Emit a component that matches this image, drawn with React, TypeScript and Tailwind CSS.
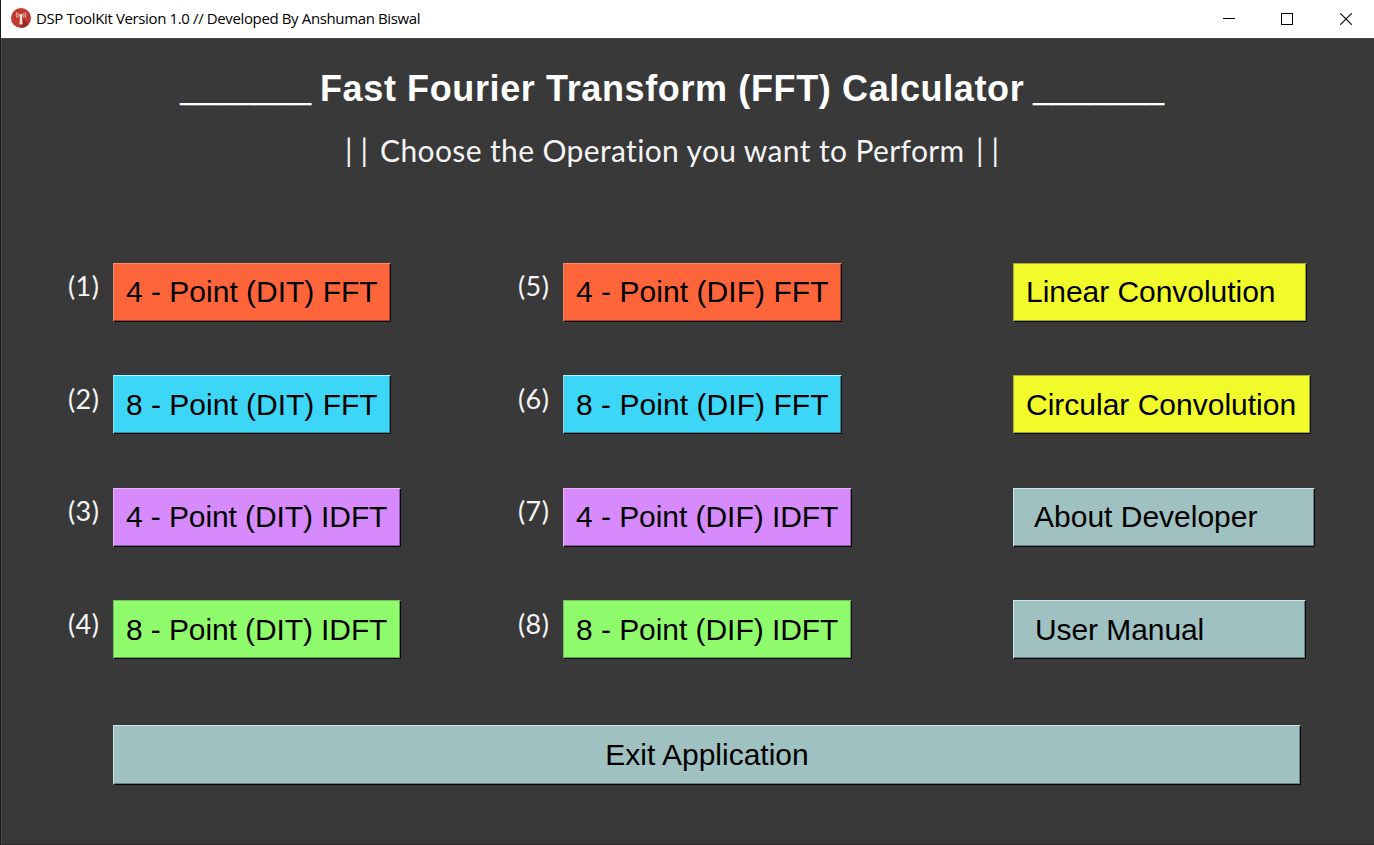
type Tone = 'orange' | 'cyan' | 'violet' | 'green' | 'yellow' | 'teal';

const tones: Record<Tone, string> = {
  orange: 'bg-[#ff653a] border-t-[#ff8b6b] border-l-[#e08a72] shadow-[inset_-1px_-1px_0_#a54226]',
  cyan: 'bg-[#3dd6f7] border-t-[#a5f8ff] border-l-[#8fd6e2] shadow-[inset_-1px_-1px_0_#2a8ea3]',
  violet: 'bg-[#d68afc] border-t-[#e9b6fb] border-l-[#e0b8ee] shadow-[inset_-1px_-1px_0_#8c5ba6]',
  green: 'bg-[#8ffb6c] border-t-[#79bd63] border-l-[#79bd63] shadow-[inset_-1px_-1px_0_#5fa548]',
  yellow: 'bg-[#f1fb2c] border-t-[#a9af3a] border-l-[#a9af3a] shadow-[inset_-1px_-1px_0_#9ca41e]',
  teal: 'bg-[#a0c1c1] border-t-[#c9e6e6] border-l-[#c9e6e6] shadow-[inset_-1px_-1px_0_#6a8080]',
};

type Op = { label: string; tone: Tone; box: string; text: string };

const dit: Op[] = [
  { label: '4 - Point (DIT) FFT', tone: 'orange', box: 'w-[278px]', text: 'pl-3' },
  { label: '8 - Point (DIT) FFT', tone: 'cyan', box: 'w-[278px]', text: 'pl-3' },
  { label: '4 - Point (DIT) IDFT', tone: 'violet', box: 'w-[288px]', text: 'pl-3 tracking-[-0.1px]' },
  { label: '8 - Point (DIT) IDFT', tone: 'green', box: 'w-[288px]', text: 'pl-3 tracking-[-0.1px]' },
];

const dif: Op[] = [
  { label: '4 - Point (DIF) FFT', tone: 'orange', box: 'w-[279px]', text: 'pl-3 tracking-[0.05px]' },
  { label: '8 - Point (DIF) FFT', tone: 'cyan', box: 'w-[279px]', text: 'pl-3 tracking-[0.05px]' },
  { label: '4 - Point (DIF) IDFT', tone: 'violet', box: 'w-[289px]', text: 'pl-3 tracking-[-0.05px]' },
  { label: '8 - Point (DIF) IDFT', tone: 'green', box: 'w-[289px]', text: 'pl-3 tracking-[-0.05px]' },
];

const extra: Op[] = [
  { label: 'Linear Convolution', tone: 'yellow', box: 'w-[294px]', text: 'pl-3 tracking-[-0.04px]' },
  { label: 'Circular Convolution', tone: 'yellow', box: 'w-[298px]', text: 'pl-3' },
  { label: 'About Developer', tone: 'teal', box: 'w-[302px]', text: 'pl-5' },
  { label: 'User Manual', tone: 'teal', box: 'w-[293px]', text: 'pl-[21px] tracking-[-0.08px]' },
];

function OpButton({ op }: { op: Op }) {
  return (
    <button
      className={`flex h-[59px] shrink-0 items-center whitespace-pre border border-r-[#080808] border-b-[#080808] pb-[0.3px] font-['Liberation_Sans',Arial,sans-serif] text-[30px] leading-none text-black ${tones[op.tone]} ${op.box} ${op.text}`}
    >
      {op.label}
    </button>
  );
}

function Column({ ops, start, width }: { ops: Op[]; start?: number; width: string }) {
  return (
    <div className={`flex flex-col gap-[53.4px] ${width}`}>
      {ops.map((op, i) => (
        <div key={op.label} className="flex h-[59px]">
          {start !== undefined && (
            <span className="w-[45px] shrink-0 pt-[7.35px] font-['Lato',Carlito,sans-serif] text-[27px] tracking-[0.4px] leading-[32px] text-[#f4f4f4]">
              ({start + i})
            </span>
          )}
          <OpButton op={op} />
        </div>
      ))}
    </div>
  );
}

function AppIcon() {
  return (
    <svg className="mt-[-2px] h-5 w-5" viewBox="0 0 20 20" fill="none">
      <circle cx="10" cy="10" r="10" fill="#c0392f" />
      <path d="M10 9 L17.5 16.5 A10 10 0 0 1 11 20 L9 17Z" fill="#922c26" />
      <path d="M9 8h2l.5 8.5h-3z" fill="#f3dcda" />
      <circle cx="10" cy="7.3" r="1.6" fill="#f3dcda" />
      <path
        d="M7.4 5Q6.4 7.2 7.4 9.4M12.6 5Q13.6 7.2 12.6 9.4M5.9 4.4Q4.4 7.2 5.9 10M14.1 4.4Q15.6 7.2 14.1 10"
        stroke="#e5b3af"
        strokeWidth="1"
      />
    </svg>
  );
}

export default function App() {
  return (
    <div className="flex h-[845px] w-[1374px] flex-col overflow-hidden border-l border-[#1c1c1c] bg-[#393939]">
      <header className="flex h-[38px] shrink-0 items-center bg-white pl-[10px]">
        <AppIcon />
        <span className="mt-[-2px] ml-[5px] whitespace-nowrap font-['Open_Sans','Noto_Sans',sans-serif] text-[15px] tracking-[-0.37px] text-black">
          DSP ToolKit Version 1.0 // Developed By Anshuman Biswal
        </span>
        <div className="ml-auto flex items-center gap-[46px] pr-[22px] text-black">
          <svg className="h-3 w-3" viewBox="0 0 12 12" shapeRendering="crispEdges">
            <path d="M0 5h12v1H0z" fill="currentColor" />
          </svg>
          <svg className="h-3 w-3" viewBox="0 0 12 12" shapeRendering="crispEdges">
            <path d="M.5.5h11v11H.5z" fill="none" stroke="currentColor" />
          </svg>
          <svg className="ml-px h-3 w-3" viewBox="0 0 12 12">
            <path d="M.3.3l11.4 11.4M11.7.3L.3 11.7" stroke="currentColor" strokeWidth="1.1" />
          </svg>
        </div>
      </header>

      <main className="flex flex-1 flex-col border-t border-b border-l border-t-[#444] border-b-[#2a2a2a] border-l-[#484848]">
        <h1 className="mt-[29px] flex h-[42px] items-center whitespace-pre pl-[178px] font-['Liberation_Sans',Arial,sans-serif] text-[36px] font-bold leading-[40px] text-white">
          <span className="w-[140px] pb-[2px] text-[34px] tracking-[-0.2px] [text-shadow:0_1px_0_#fff]">_______</span>
          <span className="w-[713px] tracking-[0.62px]">Fast Fourier Transform (FFT) Calculator</span>
          <span className="pb-[2px] text-[34px] tracking-[-0.2px] [text-shadow:0_1px_0_#fff]">_______</span>
        </h1>
        <p className="mt-[20px] flex h-[40px] items-center whitespace-pre pl-[343px] font-['Lato',Carlito,sans-serif] text-[30px] leading-[40px] text-[#f4f4f4]">
          <span className="w-[35px] tracking-[8px]">||</span>
          <span className="w-[596px] tracking-[0.37px]">Choose the Operation you want to Perform</span>
          <span className="tracking-[8px]">||</span>
        </p>

        <div className="mt-[93px] flex pl-[66px]">
          <Column ops={dit} start={1} width="w-[450px]" />
          <Column ops={dif} start={5} width="w-[495px]" />
          <Column ops={extra} width="w-[302px]" />
        </div>

        <button className="mt-[65.8px] ml-[111px] flex h-[60px] w-[1188px] items-center justify-center border border-t-[#c9e6e6] border-r-[#080808] border-b-[#080808] border-l-[#c9e6e6] bg-[#a0c1c1] font-['Liberation_Sans',Arial,sans-serif] text-[30px] leading-none text-black shadow-[inset_-1px_-1px_0_#6a8080]">
          Exit Application
        </button>
      </main>
    </div>
  );
}
